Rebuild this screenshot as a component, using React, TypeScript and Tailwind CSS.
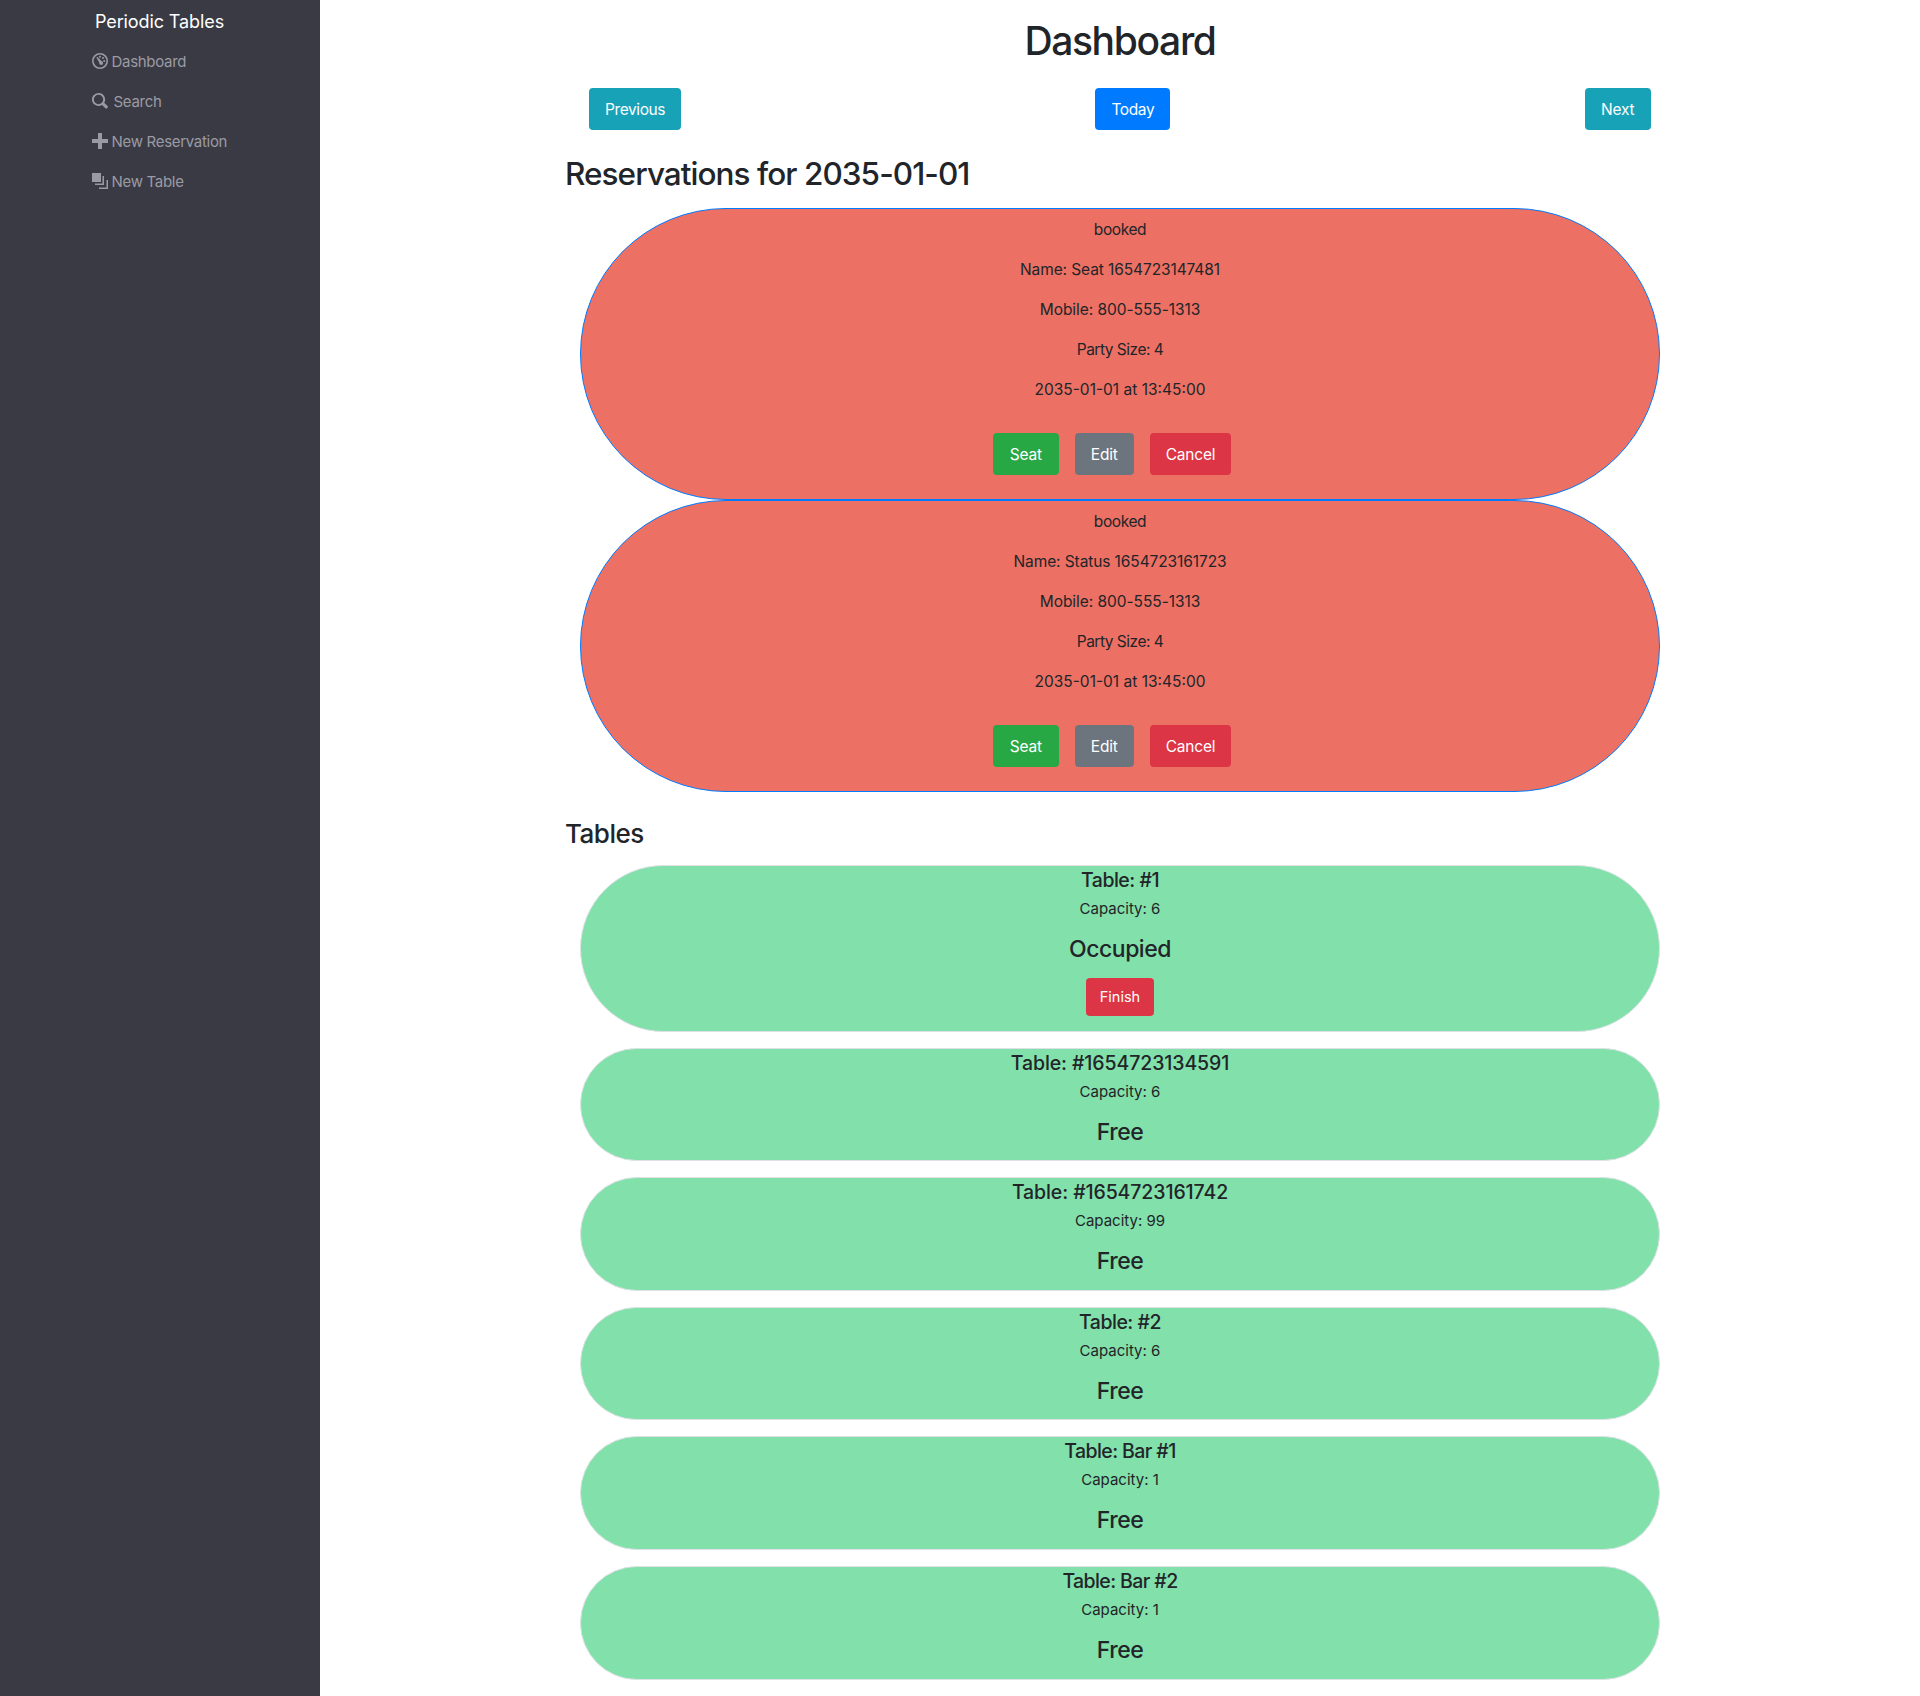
import React from "react";

const font = { fontFamily: "Inter, 'Liberation Sans', sans-serif" };

function DashIcon() {
  return (
    <svg width="16" height="16" viewBox="0 0 16 16" fill="currentColor" className="-translate-y-px">
      <path d="M8 0a8 8 0 1 0 0 16A8 8 0 0 0 8 0Zm0 1.6a6.4 6.4 0 1 1 0 12.8A6.4 6.4 0 0 1 8 1.6Z" />
      <circle cx="8" cy="3.8" r="1" />
      <circle cx="12.2" cy="8" r="1" />
      <circle cx="11" cy="5" r="1" />
      <path d="M4.4 4.6 5.6 4 9.4 8a2 2 0 1 1-2.2 1.6L4.4 4.6Z" />
    </svg>
  );
}
function SearchIcon() {
  return (
    <svg width="16" height="16" viewBox="0 0 16 16" fill="currentColor" className="-translate-y-px">
      <path d="M6.5 0a6.5 6.5 0 1 0 3.6 11.9l3.3 3.4a1.6 1.6 0 0 0 2.2-2.2l-3.4-3.3A6.5 6.5 0 0 0 6.5 0Zm0 1.8a4.7 4.7 0 1 1 0 9.4 4.7 4.7 0 0 1 0-9.4Z" />
    </svg>
  );
}
function PlusIcon() {
  return (
    <svg width="16" height="16" viewBox="0 0 16 16" fill="currentColor" className="-translate-y-px">
      <path d="M6 0h4v6h6v4h-6v6H6v-6H0V6h6V0Z" />
    </svg>
  );
}
function LayersIcon() {
  return (
    <svg width="16" height="16" viewBox="0 0 16 16" fill="currentColor" className="-translate-y-px">
      <path d="M0 0h9v9H0V0Z" />
      <path d="M10.5 3h1.5v9H3v-1.5h7.5V3Z" />
      <path d="M14.5 7H16v9H7v-1.5h7.5V7Z" />
    </svg>
  );
}

const nav = [
  { icon: <DashIcon />, label: "Dashboard", cls: "ml-[3.5px]" },
  { icon: <SearchIcon />, label: "Search", cls: "ml-[5.5px]" },
  { icon: <PlusIcon />, label: "New Reservation", cls: "ml-[3.5px]" },
  { icon: <LayersIcon />, label: "New Table", cls: "ml-[3.5px]" },
];

const reservations = ["Seat 1654723147481", "Status 1654723161723"];
const tables = [
  { name: "#1", cap: 6, occupied: true, track: "tracking-[-0.5px]" },
  { name: "#1654723134591", cap: 6, track: "tracking-[-0.1px]" },
  { name: "#1654723161742", cap: 99, track: "tracking-[-0.1px]" },
  { name: "#2", cap: 6, track: "tracking-[-0.5px]" },
  { name: "Bar #1", cap: 1, track: "tracking-[-0.6px]" },
  { name: "Bar #2", cap: 1, track: "tracking-[-0.6px]" },
];

function Btn({ color, children, cls = "px-4 tracking-[-0.2px]" }: { color: string; children: React.ReactNode; cls?: string }) {
  return (
    <button className={`h-[42px] rounded-[4px] pt-px text-[15.5px] leading-[24px] text-white ${cls} ${color}`}>
      {children}
    </button>
  );
}

export default function App() {
  return (
    <div style={font} className="flex h-[1696px] w-[1920px] overflow-hidden bg-white text-[#212529]">
      <aside className="w-[320px] shrink-0 bg-[#3a3a45]">
        <div className="pl-[92px] pt-[10px]">
          <div className="w-[135px] text-center text-[18px] leading-[24px] tracking-[-0.1px] text-white">Periodic Tables</div>
          <ul className="mt-[8px]">
            {nav.map((n) => (
              <li key={n.label} className="flex h-[40px] items-center text-[15px] tracking-[-0.3px] text-[#9a9aa3]">
                {n.icon}
                <span className={n.cls}>{n.label}</span>
              </li>
            ))}
          </ul>
        </div>
      </aside>
      <main className="flex-1">
        <div className="mx-auto w-[1140px] px-[15px]">
          <h1 className="pt-[17px] text-center text-[39px] leading-[48px] font-medium tracking-[-1.35px]">Dashboard</h1>
          <div className="mt-[23px] flex items-center justify-between pl-[24px] pr-[24px]">
            <Btn color="bg-[#17a2b8]" cls="px-4 tracking-[-0.4px]">Previous</Btn>
            <Btn color="bg-[#007bff]" cls="px-4 tracking-[-0.4px]">Today</Btn>
            <Btn color="bg-[#17a2b8]" cls="px-[16.5px] tracking-[-0.2px]">Next</Btn>
          </div>
          <h2 className="mt-[25px] text-[31.5px] leading-[38px] font-medium tracking-[-0.95px]">Reservations for 2035-01-01</h2>
          <div className="mt-[15px] flex flex-col items-center">
            {reservations.map((r) => (
              <div
                key={r}
                className="flex h-[292px] w-[1080px] flex-col items-center rounded-[200px] border border-[#007bff] bg-[#ec7063] pt-[9px] text-center text-[15.5px] leading-[24px]"
              >
                <p className="mb-4 tracking-[-0.4px]">booked</p>
                <p className="mb-4 tracking-[-0.1px]">Name: {r}</p>
                <p className="mb-4 tracking-[-0.05px]">Mobile: 800-555-1313</p>
                <p className="mb-4 tracking-[-0.5px]">Party Size: 4</p>
                <p className="mb-4">2035-01-01 at 13:45:00</p>
                <div className="mt-[15px] flex gap-4 pr-4">
                  <Btn color="bg-[#28a745]" cls="px-[17px] tracking-[-0.2px]">Seat</Btn>
                  <Btn color="bg-[#6c757d]">Edit</Btn>
                  <Btn color="bg-[#dc3545]">Cancel</Btn>
                </div>
              </div>
            ))}
          </div>
          <h2 className="mt-[26px] text-[26px] leading-[32px] font-medium tracking-[-0.5px]">Tables</h2>
          <div className="mt-[15px] flex flex-col items-center gap-4">
            {tables.map((t) => (
              <div
                key={t.name}
                className="flex w-[1080px] flex-col items-center rounded-[200px] border border-[#dee2e6] bg-[#82e0aa] pb-[14.6px] pt-[2px] text-center"
              >
                <h5 className={`text-[19.5px] leading-[24px] font-medium ${t.track}`}>Table: {t.name}</h5>
                <p className="mt-[5px] text-[15px] leading-[24px]">Capacity: {t.cap}</p>
                <h4 className="mt-[14px] text-[23px] leading-[28px] font-medium tracking-[-0.5px]">{t.occupied ? "Occupied" : "Free"}</h4>
                {t.occupied && (
                  <button className="mt-[15px] h-[38px] rounded-[4px] bg-[#dc3545] px-[14px] text-[14.5px] text-white">
                    Finish
                  </button>
                )}
              </div>
            ))}
          </div>
        </div>
      </main>
    </div>
  );
}
